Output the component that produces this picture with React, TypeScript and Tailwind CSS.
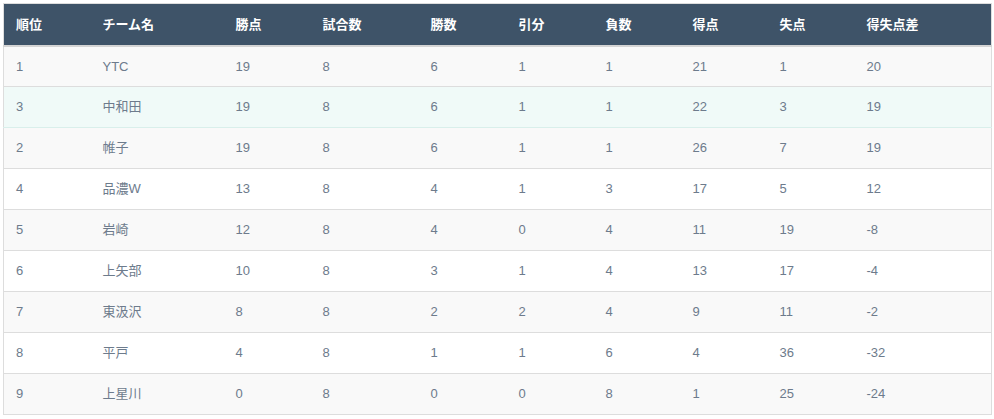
import React from "react";

const rows = [
  ["1", "YTC", "19", "8", "6", "1", "1", "21", "1", "20"],
  ["3", "中和田", "19", "8", "6", "1", "1", "22", "3", "19"],
  ["2", "帷子", "19", "8", "6", "1", "1", "26", "7", "19"],
  ["4", "品濃W", "13", "8", "4", "1", "3", "17", "5", "12"],
  ["5", "岩崎", "12", "8", "4", "0", "4", "11", "19", "-8"],
  ["6", "上矢部", "10", "8", "3", "1", "4", "13", "17", "-4"],
  ["7", "東汲沢", "8", "8", "2", "2", "4", "9", "11", "-2"],
  ["8", "平戸", "4", "8", "1", "1", "6", "4", "36", "-32"],
  ["9", "上星川", "0", "8", "0", "0", "8", "1", "25", "-24"],
];

const heads = ["順位", "チーム名", "勝点", "試合数", "勝数", "引分", "負数", "得点", "失点", "得失点差"];
const widths = ["w-[87px]", "w-[133px]", "w-[87px]", "w-[108px]", "w-[88px]", "w-[87px]", "w-[87px]", "w-[87px]", "w-[87px]", "w-[137px]"];

export default function App() {
  return (
    <div
      className="p-[3px] bg-white"
      style={{ fontFamily: '"Liberation Sans", Arial, "Noto Sans CJK JP", sans-serif' }}
    >
      <table className="w-full border-collapse border border-[#dddddd] text-[13px] table-fixed">
        <colgroup>
          {widths.map((w, i) => (
            <col key={i} className={w} />
          ))}
        </colgroup>
        <thead>
          <tr className="bg-[#3e5368] h-[42px] border-b-2 border-[#d4d4d4]">
            {heads.map((h) => (
              <th key={h} className="text-left font-bold text-white pl-[12px] p-0 align-middle">
                {h}
              </th>
            ))}
          </tr>
        </thead>
        <tbody>
          {rows.map((r, i) => {
            const hl = i === 1;
            const bg = hl ? "bg-[#f0faf8] border-[#d9efeb]" : i % 2 === 0 ? "bg-[#f9f9f9] border-[#dddddd]" : "bg-white border-[#dddddd]";
            return (
              <tr key={i} className={`h-[41px] border-b ${bg}`}>
                {r.map((c, j) => (
                  <td key={j} className="pl-[12px] p-0 text-[#6d7b8c] align-middle">
                    {c}
                  </td>
                ))}
              </tr>
            );
          })}
        </tbody>
      </table>
    </div>
  );
}
